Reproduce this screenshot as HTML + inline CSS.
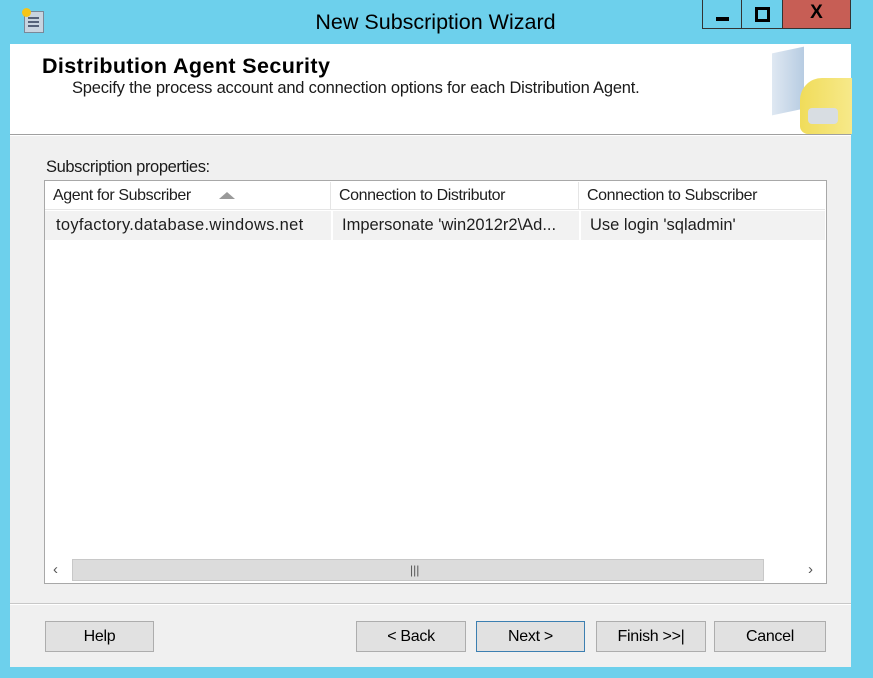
<!DOCTYPE html>
<html><head><style>
body{margin:0;width:873px;height:678px;background:#6dd0ec;position:relative;overflow:hidden;font-family:"Liberation Sans",sans-serif;}
.a{position:absolute;}
.btn{position:absolute;top:621px;height:29px;background:#e1e1e1;border:1px solid #adadad;font-size:16px;line-height:29px;text-align:center;color:#000;letter-spacing:-0.3px}
.hd{position:absolute;top:182px;height:28px;font-size:16px;line-height:28px;color:#1e1e1e;border-right:1px solid #e5e5e5;letter-spacing:-0.4px}
.cl{position:absolute;top:211px;height:29px;font-size:16.5px;line-height:29px;color:#1e1e1e;background:#f2f2f2;letter-spacing:0.3px}
</style></head><body>
<div class="a" style="left:22px;top:8px;width:22px;height:24px;">
<div class="a" style="left:2px;top:3px;width:18px;height:20px;background:#c8d4e0;border:1px solid #7a8898"></div>
<div class="a" style="left:6px;top:9px;width:11px;height:2px;background:#55627a"></div>
<div class="a" style="left:6px;top:13px;width:11px;height:2px;background:#55627a"></div>
<div class="a" style="left:6px;top:17px;width:11px;height:2px;background:#55627a"></div>
<div class="a" style="left:0;top:0;width:9px;height:9px;border-radius:50%;background:#f5c518"></div>
</div>
<div class="a" style="left:0;top:10px;width:871px;text-align:center;font-size:21.5px;color:#000;">New Subscription Wizard</div>
<div class="a" style="left:702px;top:0;width:40px;height:29px;border:1px solid #333;border-top:none;box-sizing:border-box;"><div class="a" style="left:13px;top:17px;width:13px;height:4px;background:#000"></div></div>
<div class="a" style="left:742px;top:0;width:41px;height:29px;border:1px solid #333;border-top:none;border-left:none;box-sizing:border-box;"><div class="a" style="left:13px;top:7px;width:9px;height:9px;border:3px solid #000"></div></div>
<div class="a" style="left:783px;top:0;width:68px;height:29px;background:#c75e55;border:1px solid #333;border-top:none;border-left:none;box-sizing:border-box;text-align:center;font-size:19px;font-weight:bold;line-height:26px;">X</div>
<div class="a" style="left:10px;top:44px;width:841px;height:623px;background:#f0f0f0;"></div>
<div class="a" style="left:10px;top:44px;width:841px;height:90px;background:#fff;border-bottom:1px solid #a0a0a0;"></div>
<div class="a" style="left:10px;top:135px;width:841px;height:1px;background:#fff"></div>
<div class="a" style="left:42px;top:54px;font-size:21.5px;font-weight:bold;color:#000;letter-spacing:0.4px">Distribution Agent Security</div>
<div class="a" style="left:72px;top:79px;font-size:16.5px;color:#1a1a1a;letter-spacing:-0.2px">Specify the process account and connection options for each Distribution Agent.</div>
<div class="a" style="left:772px;top:50px;width:32px;height:62px;background:linear-gradient(90deg,#dfe8f2,#b7cce2);transform:skewY(-12deg);"></div>
<div class="a" style="left:800px;top:78px;width:52px;height:56px;background:linear-gradient(90deg,#f0dc5a,#f7e98a);border-radius:22px 0 0 8px;"></div>
<div class="a" style="left:808px;top:108px;width:30px;height:16px;background:#d8dde2;border-radius:4px;"></div>
<div class="a" style="left:46px;top:158px;font-size:16.5px;color:#1a1a1a;letter-spacing:-0.4px">Subscription properties:</div>
<div class="a" style="left:44px;top:180px;width:781px;height:402px;background:#fff;border:1px solid #a8a8a8;"></div>
<div class="hd" style="left:45px;width:286px;padding-left:8px;box-sizing:border-box;">Agent for Subscriber</div>
<div class="a" style="left:219px;top:192px;width:0;height:0;border-left:8px solid transparent;border-right:8px solid transparent;border-bottom:7px solid #9a9a9a"></div>
<div class="hd" style="left:332px;width:247px;padding-left:7px;box-sizing:border-box;">Connection to Distributor</div>
<div class="hd" style="left:580px;width:245px;padding-left:7px;box-sizing:border-box;border-right:none">Connection to Subscriber</div>
<div class="a" style="left:45px;top:209px;width:780px;height:1px;background:#e5e5e5"></div>
<div class="cl" style="left:45px;width:286px;padding-left:11px;box-sizing:border-box;">toyfactory.database.windows.net</div>
<div class="cl" style="left:333px;width:246px;padding-left:9px;box-sizing:border-box;letter-spacing:0">Impersonate 'win2012r2\Ad...</div>
<div class="cl" style="left:581px;width:244px;padding-left:9px;box-sizing:border-box;letter-spacing:0">Use login 'sqladmin'</div>
<div class="a" style="left:45px;top:558px;width:780px;height:24px;background:#fff;"></div>
<div class="a" style="left:72px;top:559px;width:692px;height:22px;background:#dcdcdc;border:1px solid #c8c8c8;box-sizing:border-box;"></div>
<div class="a" style="left:410px;top:563px;font-size:12px;color:#555">|||</div>
<div class="a" style="left:53px;top:561px;font-size:15px;color:#555">&lsaquo;</div>
<div class="a" style="left:808px;top:561px;font-size:15px;color:#555">&rsaquo;</div>
<div class="a" style="left:10px;top:603px;width:841px;height:1px;background:#c8c8c8"></div>
<div class="a" style="left:10px;top:604px;width:841px;height:1px;background:#fff"></div>
<div class="btn" style="left:45px;width:107px;">Help</div>
<div class="btn" style="left:356px;width:108px;">&lt; Back</div>
<div class="btn" style="left:476px;width:107px;border-color:#3c7fb1;">Next &gt;</div>
<div class="btn" style="left:596px;width:108px;">Finish &gt;&gt;|</div>
<div class="btn" style="left:714px;width:110px;">Cancel</div>
</body></html>
